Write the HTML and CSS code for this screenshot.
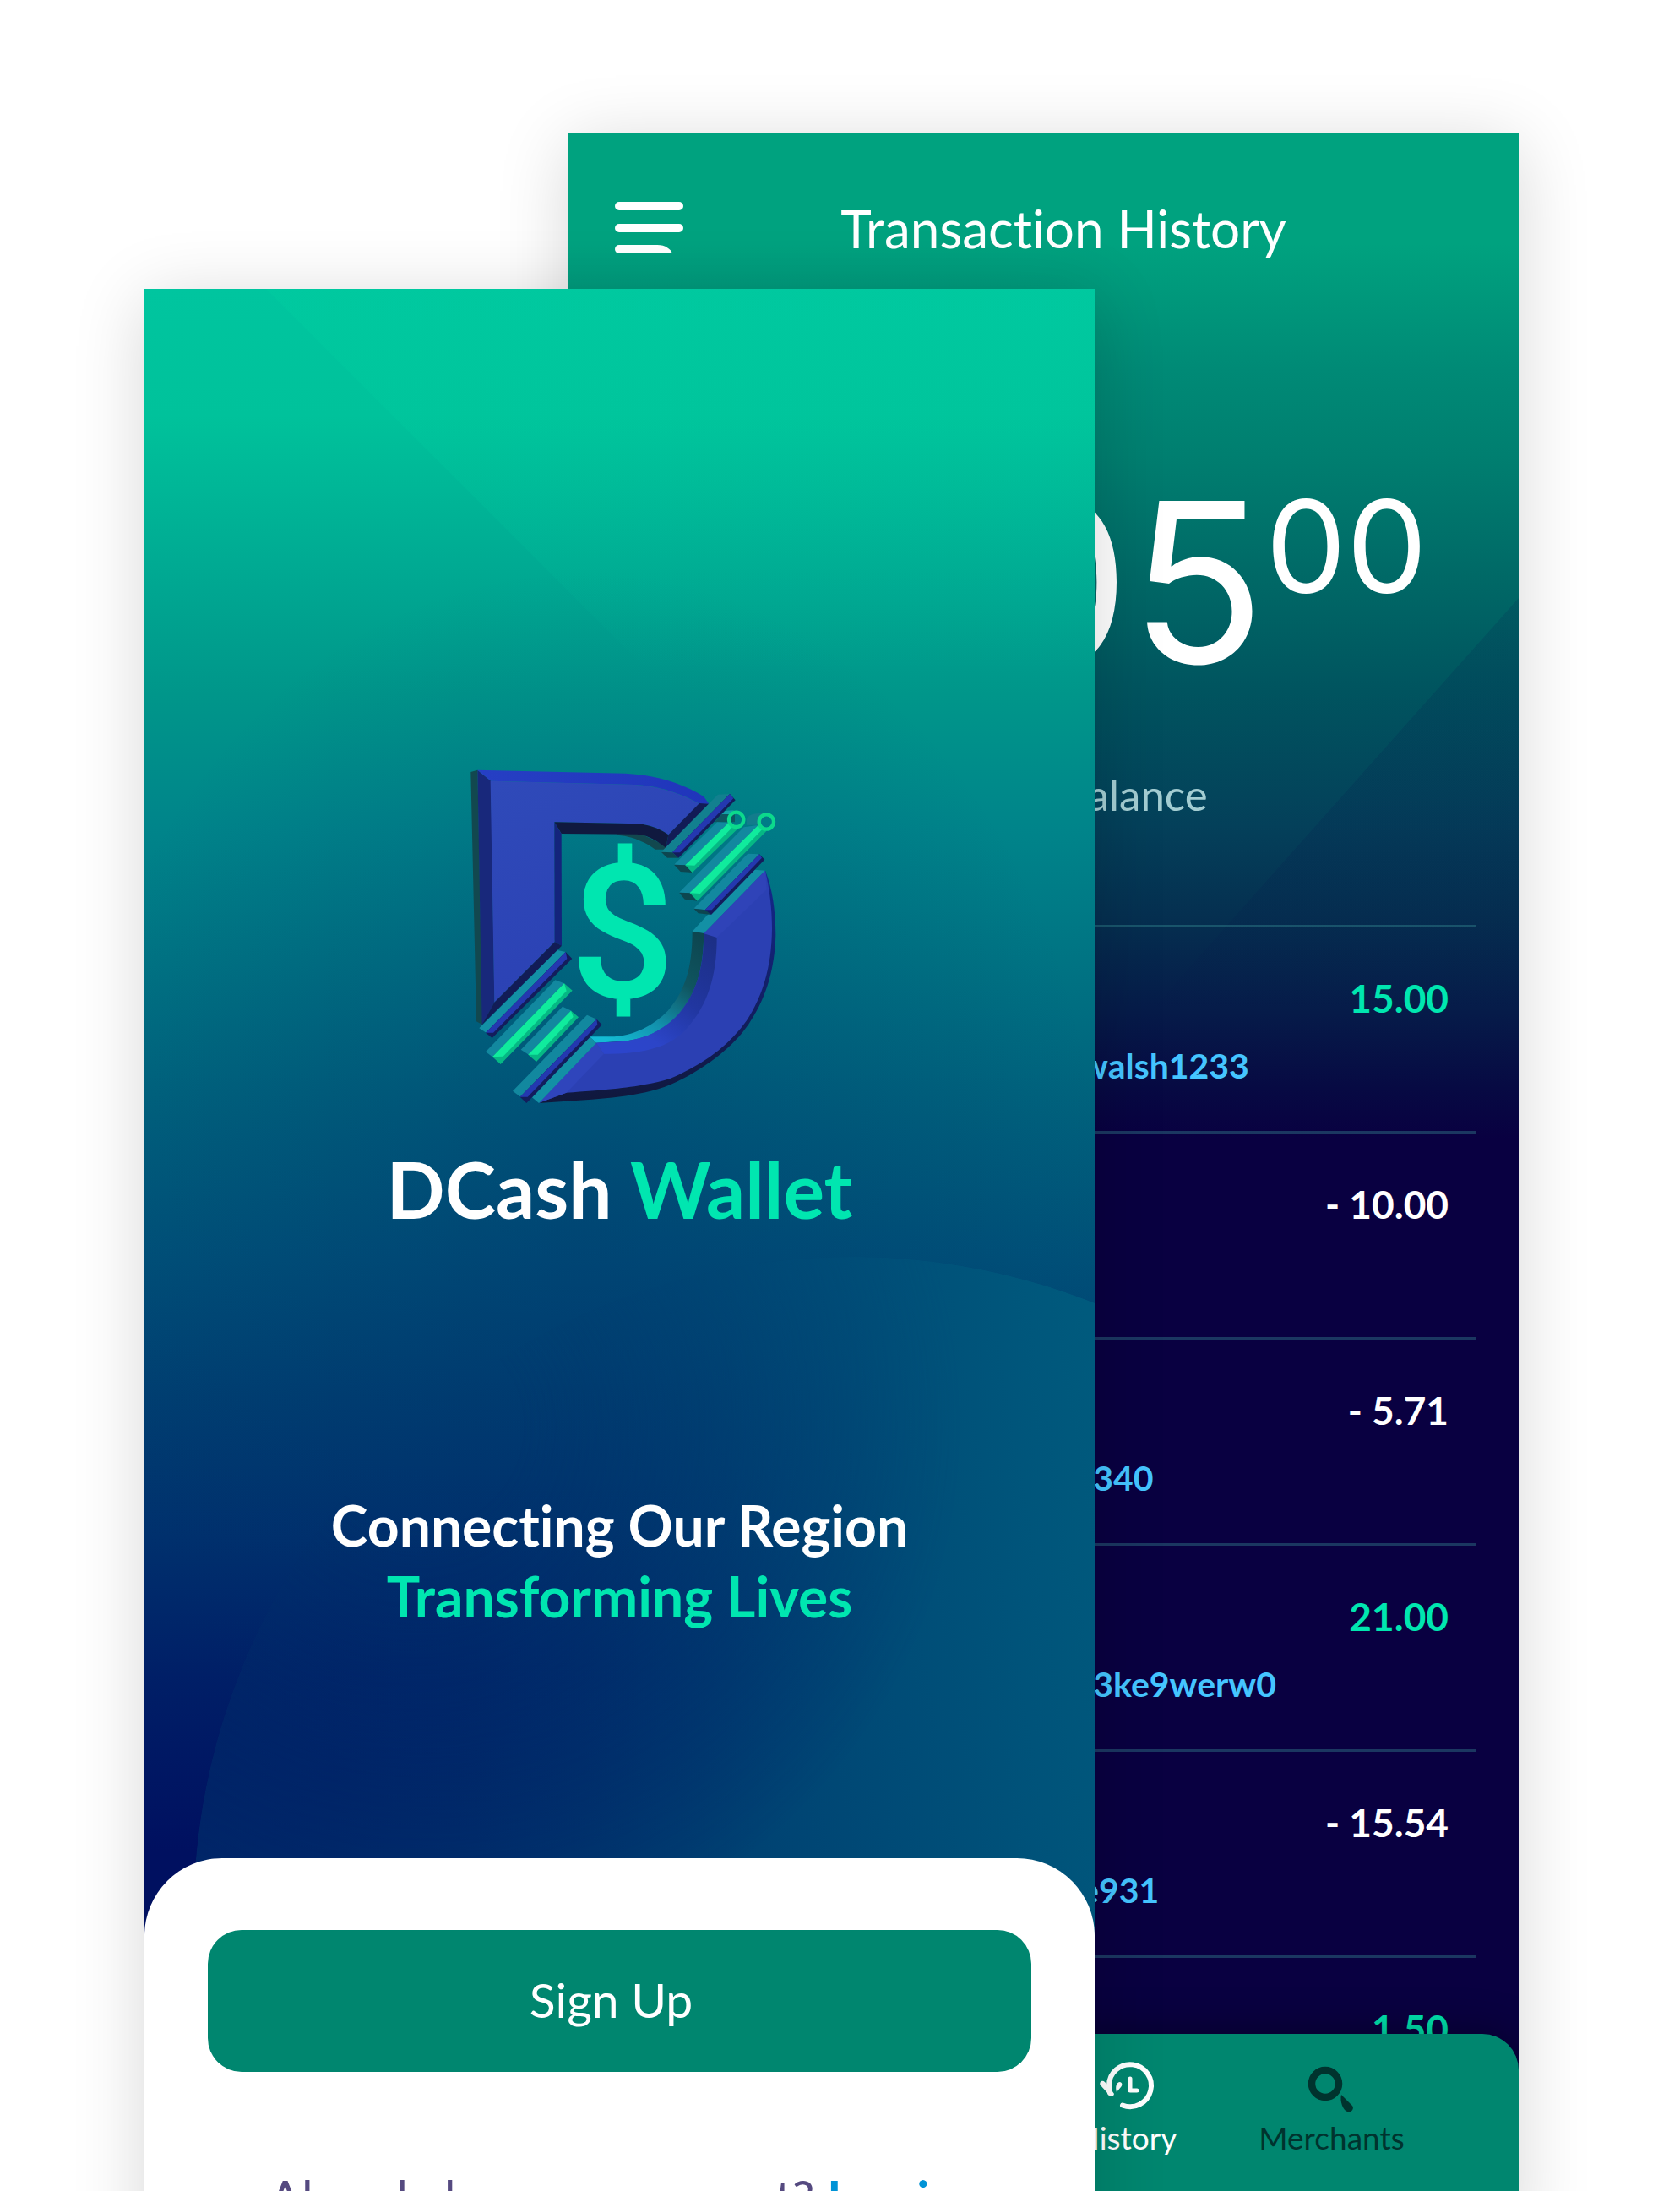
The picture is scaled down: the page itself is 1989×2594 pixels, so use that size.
FILE: index.html
```html
<!DOCTYPE html>
<html lang="en">
<head>
<meta charset="utf-8">
<meta name="viewport" content="width=device-width, initial-scale=1">
<title>DCash Wallet</title>
<link rel="stylesheet" href="styles.css">
</head>
<body>
<main class="stage">
  <section class="phone history" aria-label="Transaction History">
    <header class="topbar">
      <button class="menu" type="button" aria-label="Menu">
        <svg viewBox="0 0 82 62" width="82" height="62" fill="#fff">
          <rect x="0" y="0" width="81" height="10" rx="5"/>
          <rect x="0" y="26" width="81" height="10" rx="5"/>
          <path d="M5 51H50C60 51 66 56 68 61H5A5 5 0 0 1 5 51Z"/>
        </svg>
      </button>
      <h2 class="topbar-title">Transaction History</h2>
    </header>
    <p class="amount"><span>05</span><span class="cents">00</span></p>
    <p class="balance">Available Balance</p>
    <ul class="rows">
      <li class="row"><span class="value gain">15.00</span><a class="who" href="#">walsh1233</a></li>
      <li class="row"><span class="value">- 10.00</span></li>
      <li class="row"><span class="value">- 5.71</span><a class="who" href="#">r340</a></li>
      <li class="row"><span class="value gain">21.00</span><a class="who" href="#">r3ke9werw0</a></li>
      <li class="row"><span class="value">- 15.54</span><a class="who" href="#">e931</a></li>
      <li class="row"><span class="value gain">1.50</span></li>
    </ul>
    <nav class="tabs">
      <a class="tab current" href="#">
        <svg class="tab-icon" viewBox="0 0 64 56" width="64" height="56" fill="none" stroke="#fff" stroke-width="6" stroke-linecap="round" stroke-linejoin="round">
          <path d="M12 37C11 34 11 31 11 28A25 25 0 1 1 27 51.500"/>
          <path d="M36 20V34H44" stroke-width="5"/>
          <path d="M0.500 27.500C-1 24 3 21 6 24L10 28L17 38C16 42 13 41 11 39Z" fill="#fff" stroke="none"/>
          <path d="M20 36C18 29 20 24 24 24C27 25 27 28 25 30Z" fill="#fff" stroke="none"/>
        </svg>History</a>
      <a class="tab" href="#">
        <svg class="tab-icon" viewBox="8 0 64 56" width="64" height="56">
          <circle cx="32" cy="26" r="16" fill="none" stroke="#00332e" stroke-width="8.500"/>
          <path d="M51 39L64 52C67 56 62 61 58 59C53 57 49 47 51 39Z" fill="#00332e"/>
        </svg>Merchants</a>
    </nav>
  </section>

  <section class="phone welcome" aria-label="Welcome">
    <div class="hero">
      <svg class="logo" viewBox="-20 0 1320 1380" width="440" height="460" role="img" aria-label="DCash logo">
        <defs>
          <linearGradient id="face" x1="0" y1="0" x2="0.4" y2="1"><stop offset="0" stop-color="#2f4ab9"/><stop offset="1" stop-color="#2b41b4"/></linearGradient>
          <linearGradient id="top" x1="0" y1="0" x2="1" y2="0"><stop offset="0" stop-color="#263fc4"/><stop offset="1" stop-color="#2035bb"/></linearGradient>
          <linearGradient id="inner" x1="0.9" y1="0" x2="0.2" y2="1"><stop offset="0" stop-color="#1c2f86"/><stop offset="0.45" stop-color="#2136a0"/><stop offset="0.8" stop-color="#2c45c8"/><stop offset="1" stop-color="#2c45cc"/></linearGradient>
          <linearGradient id="rim" x1="0.9" y1="0" x2="0.2" y2="1"><stop offset="0" stop-color="#0d4650"/><stop offset="0.35" stop-color="#0f5560"/><stop offset="0.7" stop-color="#1290ac"/><stop offset="1" stop-color="#14bbd4"/></linearGradient>
          <linearGradient id="edge" x1="0" y1="0" x2="0" y2="1"><stop offset="0" stop-color="#14288e"/><stop offset="0.6" stop-color="#121e60"/><stop offset="1" stop-color="#10183c"/></linearGradient>
        </defs>
        <!-- upper left part of the D -->
        <path d="M110 102L134 95L152 1000L130 988Z" fill="#12484f"/>
        <path d="M630 322L712 320L812 370L800 377H765C720 345 680 330 630 326Z" fill="#12484f"/>
        <path d="M134 95L182 134L194 920L150 1000Z" fill="#18287b"/>
        <path d="M134 95L660 107C760 112 860 140 938 190L956 215L925 216C850 175 770 150 690 147L182 134Z" fill="url(#top)"/>
        <path d="M180 134L690 147C770 152 850 175 922 215L812 325C780 302 745 290 705 286L407 280L408 706L194 920Z" fill="url(#face)"/>
        <path d="M922 213L956 215L803 371L812 325Z" fill="#121c56"/>
        <path d="M407 280L705 286C745 290 780 302 812 325L803 371C770 345 735 325 700 323L432 321Z" fill="#10193f"/>
        <path d="M407 280L432 321L433 719L408 706Z" fill="#14247c"/>
        <path d="M408 706L433 719L150 1000L194 920Z" fill="#121c56"/>
        <!-- lower right part of the D -->
        <path d="M897 668L1100 448L1156 452L938 676Z" fill="#1390a5"/>
        <path d="M897 668L938 675C935 800 915 890 850 965C780 1045 700 1055 640 1058L556 1064L532 1042L620 1042C700 1035 760 1000 810 950C870 880 897 800 897 668Z" fill="url(#rim)"/>
        <path d="M1156 452C1182 520 1192 590 1193 680C1190 800 1160 900 1105 985C1060 1060 960 1150 820 1212C740 1245 640 1258 540 1265L352 1278L450 1235L1100 900Z" fill="url(#edge)"/>
        <path d="M1156 452C1172 520 1180 590 1180 660C1178 800 1145 900 1090 985C1030 1070 940 1140 820 1190C740 1215 650 1228 450 1241L352 1277L556 1064L640 1060C720 1054 790 1025 850 960C910 890 938 800 938 676Z" fill="#2b40b3"/>
        <path d="M938 676L1156 452L1161 520L984 690Z" fill="#2f43b8"/>
        <path d="M938 676L984 690C984 830 950 930 880 1010C820 1080 720 1105 583 1103L556 1064L640 1060C720 1054 790 1025 850 960C910 890 938 800 938 676Z" fill="url(#inner)"/>
        <path d="M352 1277L556 1064L583 1103L450 1241Z" fill="#2f45bc"/>
        <path d="M532 1042L556 1064L352 1278L328 1258Z" fill="#1390a5"/>
        <!-- traces, top right -->
        <path d="M786 386L988 182L1030 180L832 388L845 407L808 407Z" fill="#12808f"/>
        <path d="M786 386L826 388L848 407L808 407Z" fill="#0d4650"/>
        <path d="M826 388L1030 180L1050 202L848 407Z" fill="#131d5c"/>
        <path d="M826 388L1030 180L1043 196L853 388Z" fill="#2438b0"/>
        <path d="M975 280L1013 240H1048V280Z" fill="#0d5660"/>
        <path d="M1013 240L1045 238L1030 252H1002Z" fill="#15a0a8"/>
        <path d="M832 431L985 280L1030 282L875 433Z" fill="#12889f"/>
        <path d="M832 431L872 433L897 459L855 456Z" fill="#0d4650"/>
        <path d="M872 433L1030 278L1060 302L897 459Z" fill="#06b884"/>
        <path d="M872 433L1030 278L1046 292L905 434Z" fill="#10eb9d"/>
        <circle cx="1053" cy="271" r="26" fill="none" stroke="#0cd98c" stroke-width="13"/>
        <path d="M1090 270C1095 255 1110 248 1150 248L1140 290H1090Z" fill="#127c8c"/>
        <path d="M850 530L1080 298L1135 290L895 532Z" fill="#12889f"/>
        <path d="M850 530L890 532L915 560L870 554Z" fill="#0d4650"/>
        <path d="M888 532L1132 290L1160 312L915 560Z" fill="#06b884"/>
        <path d="M888 532L1132 290L1148 303L925 534Z" fill="#10eb9d"/>
        <circle cx="1160" cy="279" r="26" fill="none" stroke="#0cd98c" stroke-width="13"/>
        <path d="M902 587L1094 392L1135 394L945 592Z" fill="#12889f"/>
        <path d="M902 587L944 592L964 609L918 604Z" fill="#0d4650"/>
        <path d="M942 592L1135 394L1154 413L964 609Z" fill="#131d5c"/>
        <path d="M942 592L1135 394L1144 407L966 592Z" fill="#2438b0"/>
        <!-- traces, bottom left -->
        <path d="M140 1012L418 735L447 741L165 1028Z" fill="#1390a5"/>
        <path d="M163 1028L447 741L470 765L186 1047Z" fill="#131d5c"/>
        <path d="M163 1028L447 741L452 765L190 1028Z" fill="#2438b0"/>
        <path d="M163 1096L410 841L442 853L187 1114Z" fill="#12889f"/>
        <path d="M187 1114L442 853L471 878L216 1140Z" fill="#06b884"/>
        <path d="M187 1114L442 853L450 880L225 1112Z" fill="#10eb9d"/>
        <path d="M288 1088L436 935L468 950L316 1106Z" fill="#12889f"/>
        <path d="M314 1106L466 950L493 973L343 1131Z" fill="#06b884"/>
        <path d="M314 1106L466 950L474 972L348 1106Z" fill="#10eb9d"/>
        <path d="M259 1235L523 965L557 980L287 1256Z" fill="#12889f"/>
        <path d="M285 1256L557 980L576 1000L308 1278Z" fill="#131d5c"/>
        <path d="M285 1256L557 980L560 1000L312 1256Z" fill="#2438b0"/>
        <text class="coin" x="648" y="904" text-anchor="middle">$</text>
      </svg>
      <h1 class="brand">DCash <span class="mint">Wallet</span></h1>
      <p class="tagline">Connecting Our Region<br><span class="mint">Transforming Lives</span></p>
    </div>
    <div class="sheet">
      <button class="signup" type="button">Sign Up</button>
      <p class="login">Already have an account? <a href="#">Log in</a></p>
    </div>
  </section>
</main>
</body>
</html>
```
FILE: styles.css
```css
* { box-sizing: border-box; margin: 0; padding: 0; }

body {
  background: #fff;
  font-family: Lato, "Open Sans", sans-serif;
  font-variant-ligatures: none;
  color: #fff;
}

a { color: inherit; text-decoration: none; }
button { border: 0; background: none; font: inherit; color: inherit; }

/* Two overlapping phones that bleed off the bottom of the window */
.stage {
  display: grid;
  grid-template-columns: 171fr 502fr 623fr 502fr 191fr;
  align-items: start;
  height: 100vh;
  overflow: hidden;
}

.phone {
  grid-row: 1;
  position: relative;
  overflow: hidden;
  box-shadow: 0 12px 80px rgba(0, 0, 0, 0.16);
}

/* Transaction history */
.history {
  grid-column: 3 / 5;
  margin-top: 158px;
  padding-top: 76px;
  background: linear-gradient(#00a27f 0, #00a27f 130px, #008a76 280px, #007f70 380px, #006866 530px, #00545f 660px, #04405a 820px, #052f50 930px, #061b49 1040px, #070a43 1130px, #090041 1190px);
}

.history::before {
  content: "";
  position: absolute;
  top: 550px;
  right: 0;
  width: 458px;
  height: 514px;
  background: linear-gradient(rgba(6, 10, 72, 0.13), rgba(6, 10, 72, 0.12) 60%, rgba(6, 10, 72, 0));
  clip-path: polygon(100% 0, 100% 100%, 0 100%);
}

.history > * { position: relative; }

.topbar {
  display: flex;
  align-items: center;
  padding: 0 90px 0 55px;
}

.menu, .menu svg { display: block; }

.topbar-title {
  flex: 1;
  text-align: center;
  font-size: 62px;
  line-height: 72px;
  font-weight: 400;
}

.amount {
  display: flex;
  justify-content: flex-end;
  margin-top: 251px;
  padding-right: 108px;
  font-family: Inter, sans-serif;
  font-size: 264px;
  line-height: 264px;
}

.cents {
  padding-top: 14px;
  font-size: 152px;
  line-height: 152px;
}

.balance {
  margin-top: 90px;
  text-align: center;
  font-size: 51px;
  line-height: 60px;
  color: #a3cdd2;
}

.rows {
  margin: 124px 50px 0;
  list-style: none;
}

.row {
  display: grid;
  grid-template-columns: 556fr 436fr;
  align-content: start;
  row-gap: 28px;
  min-height: 244px;
  padding: 56px 33px 0 0;
  border-top: 3px solid rgba(64, 160, 160, 0.34);
  font-size: 46px;
  line-height: 56px;
  font-weight: 700;
}

.value {
  grid-column: 2;
  text-align: right;
}

.who {
  grid-column: 2;
  font-size: 41px;
  line-height: 48px;
  color: #45c5ff;
}

.gain, .mint { color: #00e6b0; }

.tabs {
  display: flex;
  justify-content: flex-end;
  margin-top: -151px;
  padding: 33px 100px 46px;
  min-height: 240px;
  border-radius: 43px 43px 0 0;
  background: #00866f;
  box-shadow: 0 0 50px rgba(0, 0, 0, 0.4);
}

.tab {
  flex: 0 1 243px;
  display: flex;
  flex-direction: column;
  align-items: center;
  gap: 12px;
  font-size: 37px;
  line-height: 44px;
  color: #00332e;
}

.tab-icon { display: block; width: 64px; height: 56px; overflow: visible; }
.current { color: #fff; }

/* Welcome */
.welcome {
  grid-column: 2 / 4;
  margin-top: 342px;
  background: #fff;
}

.hero {
  position: relative;
  overflow: hidden;
  display: flex;
  flex-direction: column;
  align-items: center;
  padding: 538px 0 360px;
  text-align: center;
  background:
    radial-gradient(620px 760px at 46% 56%, rgba(0, 44, 106, 0.34), rgba(0, 44, 106, 0)),
    linear-gradient(#00c59f 0, #00c29b 150px, #00ab93 320px, #00968a 480px, #00848a 640px, #007182 820px, #00607c 980px, #005078 1150px, #003f71 1310px, #00306d 1480px, #001f67 1640px, #001060 1850px);
}

.hero::before {
  content: "";
  position: absolute;
  top: 0;
  right: 0;
  width: 981px;
  height: 981px;
  background: linear-gradient(rgba(0, 206, 160, 0.4), rgba(0, 206, 160, 0) 46%);
  clip-path: polygon(0 0, 100% 0, 100% 100%);
}

.hero::after {
  content: "";
  position: absolute;
  top: 1146px;
  left: 58px;
  width: 1560px;
  height: 1560px;
  border-radius: 50%;
  background: linear-gradient(80deg, #002367, #003a6f 34%, #005a7d 72%);
  -webkit-mask-image: radial-gradient(circle at 270px 200px, transparent 120px, #000 640px);
  mask-image: radial-gradient(circle at 270px 200px, transparent 120px, #000 640px);
}

.hero > * { position: relative; z-index: 1; }

.coin {
  font-family: Roboto, sans-serif;
  font-size: 660px;
  font-weight: 500;
  fill: #00e6b0;
}

.brand {
  margin-top: 18px;
  font-size: 91px;
  line-height: 100px;
  font-weight: 700;
}

.tagline {
  margin-top: 306px;
  font-size: 66px;
  line-height: 84px;
  font-weight: 700;
}

.sheet {
  position: relative;
  z-index: 2;
  margin-top: -92px;
  padding: 85px 75px 60px;
  border-radius: 92px 92px 0 0;
  background: #fff;
}

.signup {
  display: block;
  width: 100%;
  height: 168px;
  padding: 0 20px 4px 0;
  border-radius: 40px;
  background: #00866f;
  font-size: 57px;
}

.login {
  margin-top: 117px;
  padding-right: 16px;
  text-align: center;
  font-size: 58px;
  line-height: 64px;
  color: #554a80;
}

.login a { font-weight: 700; color: #0093d6; }
```
